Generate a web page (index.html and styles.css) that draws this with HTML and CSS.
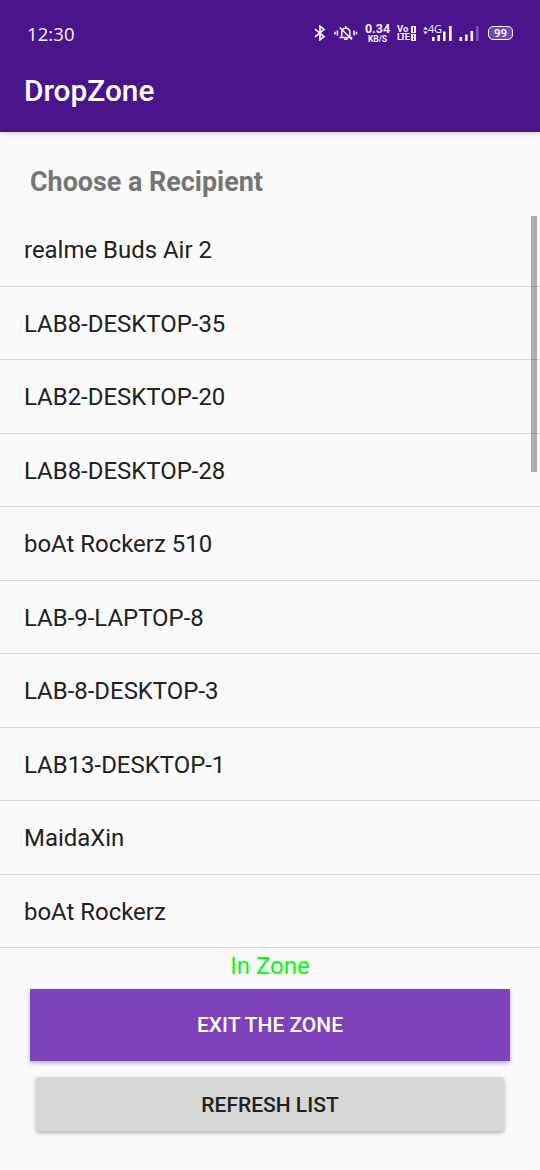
FILE: index.html
```html
<!DOCTYPE html>
<html lang="en">
<head>
<meta charset="utf-8">
<title>DropZone</title>
<link rel="stylesheet" href="styles.css">
</head>
<body>
<header class="header">
  <div class="status">
    <span class="clock">12:30</span>
    <div class="indicators">
      <svg class="bluetooth" width="12" height="16" viewBox="0 0 12 16" fill="none" stroke="currentColor" stroke-width="1.7"><path d="M1 4.2 10 11.5 6 14.8V1.2L10 4.5 1 11.8"/></svg>
      <svg class="bell" width="24" height="16" viewBox="0 0 24 16" fill="none" stroke="currentColor" stroke-width="1.5"><path d="M5.5 12.5h12.8M7.7 12V7.5C7.7 1.8 15.9 1.8 15.9 7.5V12M11.8 3V1M10 14.3h3.6M5.7 2.5 18 14.5M3.4 5.5v5M1 6.8v2.6M20 5.5v5M22.5 6.8v2.6"/></svg>
      <div class="speed"><span class="rate">0.34</span><span class="unit">KB/S</span></div>
      <div class="volte"><div class="volte-line"><span>Vo</span><i class="sim"></i></div><div class="volte-line"><span>LTE</span><i class="sim sim-two"></i></div></div>
      <div class="mobile">
        <svg width="30" height="18" viewBox="0 0 30 18" fill="currentColor"><path d="M0 5.5 2.5 2.8 5 5.5ZM0 7.5 2.5 10.2 5 7.5ZM9 13h2.6v4H9ZM14.4 11H17v6h-2.6ZM20 7.5h2.6V17H20ZM26 2h2.7v15H26Z"/></svg>
        <span class="network">4G</span>
      </div>
      <svg class="signal" width="21" height="18" viewBox="0 0 21 18" fill="currentColor"><path d="M.5 13h2.6v4H.5ZM6 10.5h2.6V17H6ZM11.5 7h2.6v10h-2.6Z"/><path d="M17 2h2.5v15H17Z" opacity=".3"/></svg>
      <div class="battery"><span>99</span></div>
    </div>
  </div>
  <h1 class="title">DropZone</h1>
</header>
<main class="content">
  <h2 class="heading">Choose a Recipient</h2>
  <div class="list-area">
    <ul class="list">
      <li class="item">realme Buds Air 2</li>
      <li class="item">LAB8-DESKTOP-35</li>
      <li class="item">LAB2-DESKTOP-20</li>
      <li class="item">LAB8-DESKTOP-28</li>
      <li class="item">boAt Rockerz 510</li>
      <li class="item">LAB-9-LAPTOP-8</li>
      <li class="item">LAB-8-DESKTOP-3</li>
      <li class="item">LAB13-DESKTOP-1</li>
      <li class="item">MaidaXin</li>
      <li class="item">boAt Rockerz</li>
    </ul>
    <div class="scrollbar"></div>
  </div>
  <p class="zone">In Zone</p>
  <div class="actions">
    <button class="button exit">EXIT THE ZONE</button>
    <button class="button refresh">REFRESH LIST</button>
  </div>
</main>
</body>
</html>
```
FILE: styles.css
```css
* { box-sizing: border-box; }
body { margin: 0; height: 1170px; overflow: hidden; background: #fafafa; color: #212121; font-family: Roboto, sans-serif; }
h1, h2, p, ul { margin: 0; padding: 0; }
.header { position: relative; height: 132px; background: #4a148c; color: #fff; box-shadow: 0 1px 5px rgba(0,0,0,.2); }
.status { display: flex; justify-content: space-between; height: 54px; padding: 22px 27px 0 27px; color: #f8f3fd; }
.clock { font: 18.5px/24px "Open Sans", sans-serif; letter-spacing: .1px; }
.indicators { display: flex; align-items: flex-start; height: 24px; }
.bluetooth { margin: 3px 8px 0 0; }
.bell { margin: 3px 7px 0 0; }
.speed { display: flex; flex-direction: column; align-items: center; width: 25px; margin-right: 7px; font-family: Roboto, sans-serif; font-weight: 700; white-space: nowrap; }
.rate { font-size: 12.5px; line-height: 12px; margin-top: 1px; }
.unit { font-size: 8.5px; line-height: 8px; }
.volte { width: 19px; margin: 3px 7px 0 0; font: 700 9.5px/8px Roboto, sans-serif; }
.volte-line { display: flex; justify-content: space-between; align-items: center; height: 8px; }
.volte-line span { letter-spacing: -1.1px; }
.volte-line:first-child span { letter-spacing: .1px; }
.sim { flex: none; width: 5px; height: 7px; border: 1.5px solid currentColor; border-width: 1px 2px; }
.sim-two { background: linear-gradient(currentColor 0 0) center / 2px 1px no-repeat; }
.mobile { position: relative; width: 30px; height: 20px; margin-right: 6px; }
.mobile svg { display: block; margin-top: 2px; }
.network { position: absolute; left: 5px; top: 1px; font: 500 11px/12px "Open Sans", sans-serif; letter-spacing: -.4px; }
.signal { margin: 2px 8px 0 0; }
.battery { display: flex; justify-content: center; align-items: center; width: 25px; height: 14px; margin-top: 4px; border: 1.5px solid currentColor; border-radius: 5px; background: #7149a8; color: #fff; font: 500 11.5px/11px Roboto, sans-serif; }
.title { padding: 19px 24px 0; font-size: 29.8px; line-height: 36px; font-weight: 500; }
.heading { height: 81px; padding: 32px 30px 0; color: #757575; font-size: 26.9px; line-height: 36px; font-weight: 700; }
.list-area { position: relative; }
.list { list-style: none; }
.item { display: flex; align-items: center; height: 73.5px; padding: 2px 24px 0; border-bottom: 1.5px solid #d9d9d9; font-size: 23.95px; }
.scrollbar { position: absolute; top: 3px; right: 3px; width: 6px; height: 256px; background: rgba(0,0,0,.3); }
.zone { height: 41px; padding-top: 2px; text-align: center; color: #0f0; font-size: 24px; line-height: 32px; }
.actions { display: flex; flex-direction: column; align-items: center; gap: 16px; }
.button { border: 0; padding: 1px 0 0; font: 500 21px/25px Roboto, sans-serif; box-shadow: 0 2px 4px rgba(0,0,0,.3); }
.exit { width: 480px; height: 72px; background: #7e43bb; color: #fff; }
.refresh { width: 468px; height: 54px; padding-top: 2px; border-radius: 3px; background: #d6d7d7; color: #212121; }
```
